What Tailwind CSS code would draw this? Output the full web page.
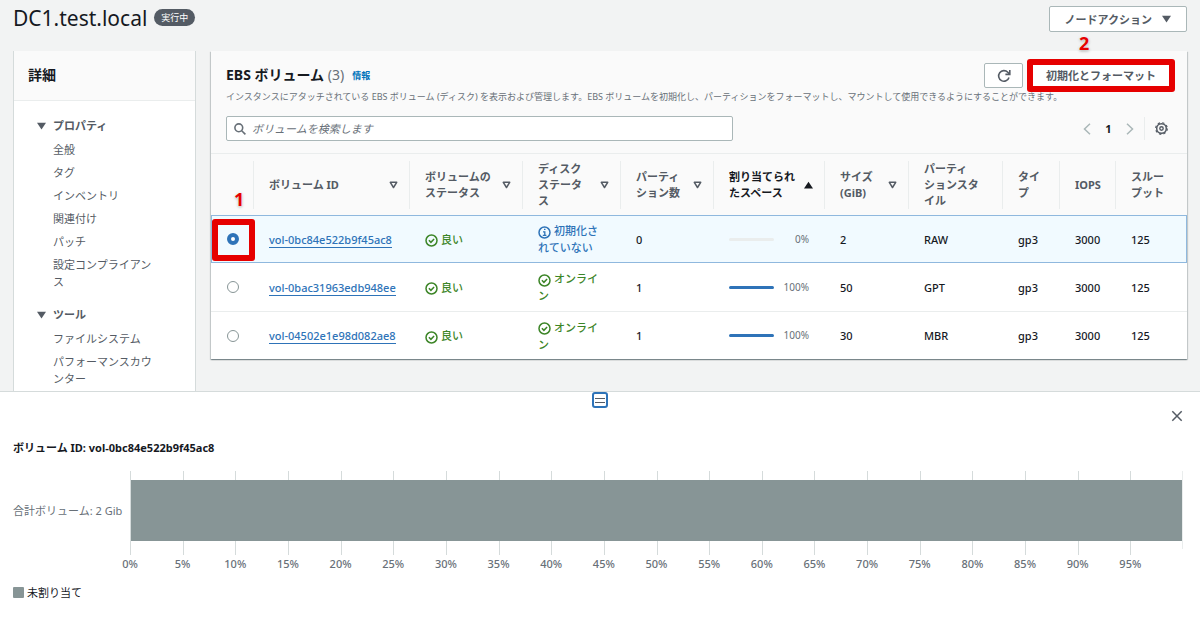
<!DOCTYPE html>
<html lang="ja">
<head>
  <meta charset="UTF-8" />
  <meta name="viewport" content="width=device-width, initial-scale=1.0" />
  <title>DC1.test.local</title>
  <script src="https://cdn.jsdelivr.net/npm/@tailwindcss/browser@4"></script>
</head>
<body class="flex flex-col h-screen overflow-hidden bg-[#f2f3f3] font-['Noto_Sans','Noto_Sans_CJK_JP',sans-serif] text-[11px] leading-[17px] text-[#16191f]">

  <!-- Shared icons -->
  <svg class="hidden">
    <symbol id="down" viewBox="0 0 8 7"><path d="M0 .5h8L4 6.5z" fill="currentColor" /></symbol>
    <symbol id="sort" viewBox="0 0 9 8"><path d="M1.3 1.3h6.4L4.5 6.5z" fill="none" stroke="currentColor" stroke-width="1.5" stroke-linejoin="round" /></symbol>
    <symbol id="ok" viewBox="0 0 13 13"><circle cx="6.5" cy="6.5" r="5.5" fill="none" stroke="currentColor" stroke-width="1.5" /><path d="M3.9 6.3l2 2 3.2-3.4" fill="none" stroke="currentColor" stroke-width="1.5" /></symbol>
    <symbol id="info" viewBox="0 0 13 13"><circle cx="6.5" cy="6.5" r="5.5" fill="none" stroke="currentColor" stroke-width="1.5" /><path d="M6 3.4h1.5M5 5.9h1.8v3.3M4.8 9.3h3.6" fill="none" stroke="currentColor" stroke-width="1.3" /></symbol>
  </svg>

  <div class="flex-1 min-h-0 overflow-hidden flex flex-col px-[13px]">
    <!-- Page header -->
    <header class="flex items-start shrink-0 pt-[6px] pb-[19px]">
      <h1 class="text-[21px] leading-[24px]">DC1.test.local</h1>
      <span class="ml-[7px] mt-[3px] px-[7px] rounded-full bg-[#545b64] text-white text-[9px] leading-[17px]">実行中</span>
      <button class="ml-auto h-[26px] px-[15px] flex items-center gap-[10px] bg-white border border-[#aab7b8] rounded-[2px] font-bold text-[#545b64]">
        ノードアクション
        <svg class="w-[9px] h-[8px]"><use href="#down" /></svg>
      </button>
    </header>

    <div class="flex flex-1 min-h-0 gap-[15px]">
      <!-- Sidebar -->
      <aside class="w-[183px] shrink-0 bg-white border-x border-[#d5dbdb]">
        <h2 class="h-[50px] px-[14px] pb-[2px] flex items-center bg-[#fafafa] border-b border-[#eaeded] text-[14px] font-bold">詳細</h2>
        <nav class="pt-[16px] pl-[23px] pr-[36px] flex flex-col gap-[16px] text-[#545b64]">
          <details open>
            <summary class="flex items-center gap-[7px] font-bold">
              <svg class="w-[9px] h-[8px]"><use href="#down" /></svg>プロパティ
            </summary>
            <ul class="mt-[7px] pl-[16px] flex flex-col gap-[6px]">
              <li><a href="#">全般</a></li>
              <li><a href="#">タグ</a></li>
              <li><a href="#">インベントリ</a></li>
              <li><a href="#">関連付け</a></li>
              <li><a href="#">パッチ</a></li>
              <li><a href="#">設定コンプライアンス</a></li>
            </ul>
          </details>
          <details open>
            <summary class="flex items-center gap-[7px] font-bold">
              <svg class="w-[9px] h-[8px]"><use href="#down" /></svg>ツール
            </summary>
            <ul class="mt-[7px] pl-[16px] flex flex-col gap-[6px]">
              <li><a href="#">ファイルシステム</a></li>
              <li><a href="#">パフォーマンスカウンター</a></li>
            </ul>
          </details>
        </nav>
      </aside>

      <!-- EBS volumes -->
      <main class="flex-1 min-w-0 self-start bg-white shadow-[0_1px_1px_0_rgba(0,28,36,0.3),1px_1px_1px_0_rgba(0,28,36,0.15),-1px_1px_1px_0_rgba(0,28,36,0.15)]">
        <div class="bg-[#fafafa] border-b border-[#eaeded] px-[15px] pt-[12px] pb-[12px]">
          <div class="flex items-center h-[25px]">
            <h2 class="pb-[2px] text-[14px] font-bold">EBS ボリューム <span class="font-normal text-[#687078]">(3)</span></h2>
            <a href="#" class="ml-[8px] text-[9px] font-bold text-[#0073bb]">情報</a>
            <button aria-label="更新" class="ml-auto w-[39px] h-[25px] flex items-center justify-center bg-white border border-[#aab7b8] rounded-[2px] text-[#545b64]">
              <svg class="w-[14px] h-[14px]" viewBox="0 0 14 14" fill="none" stroke="currentColor" stroke-width="1.6"><path d="M12 8.5A5.3 5.3 0 1 1 10.8 3.3L12.6 5.2" /><path d="M12.8 1v4.4H8.4" /></svg>
            </button>
            <div class="relative ml-[7px]">
              <button class="h-[25px] px-[15px] bg-white border border-[#aab7b8] rounded-[2px] font-bold text-[#545b64]">初期化とフォーマット</button>
              <span class="absolute -inset-x-[3px] -inset-y-[4px] border-[6px] border-[#e60000] rounded-[3px] pointer-events-none"></span>
              <span class="absolute left-[49px] -top-[32px] text-[18px] leading-[24px] font-bold text-[#e60000] [text-shadow:0_0_2px_#fff,0_1px_3px_#999]">2</span>
            </div>
          </div>
          <p class="text-[9px] leading-[18px] text-[#687078]">インスタンスにアタッチされている EBS ボリューム (ディスク) を表示および管理します。EBS ボリュームを初期化し、パーティションをフォーマットし、マウントして使用できるようにすることができます。</p>
          <div class="flex items-center mt-[10px]">
            <label class="flex items-center gap-[6px] w-[507px] h-[25px] px-[7px] bg-white border border-[#aab7b8] rounded-[2px] text-[#687078]">
              <svg class="w-[12px] h-[12px] shrink-0" viewBox="0 0 12 12" fill="none" stroke="currentColor" stroke-width="1.6"><circle cx="4.8" cy="4.8" r="3.9" /><path d="M7.7 7.7l3.7 3.7" /></svg>
              <input type="search" aria-label="ボリュームを検索します" placeholder="ボリュームを検索します" class="flex-1 min-w-0 outline-none placeholder:italic placeholder:text-[#687078]" />
            </label>
            <div class="ml-auto flex items-center pr-[4px]">
              <button aria-label="前へ" class="text-[#aab7b8]"><svg class="w-[8px] h-[12px]" viewBox="0 0 8 12" fill="none" stroke="currentColor" stroke-width="1.5"><path d="M7 .8L1.5 6 7 11.2" /></svg></button>
              <button class="w-[35px] font-bold">1</button>
              <button aria-label="次へ" class="text-[#aab7b8]"><svg class="w-[8px] h-[12px]" viewBox="0 0 8 12" fill="none" stroke="currentColor" stroke-width="1.5"><path d="M1 .8L6.5 6 1 11.2" /></svg></button>
              <button aria-label="設定" class="ml-[10px] pl-[10px] h-[23px] border-l border-[#eaeded] text-[#545b64]">
                <svg class="w-[13px] h-[13px]" viewBox="0 0 13 13" fill="none" stroke="currentColor"><circle cx="6.5" cy="6.5" r="4.8" stroke-width="1.5" /><circle cx="6.5" cy="6.5" r="5.8" stroke-width="1.2" stroke-dasharray="2.3 2.255" /><circle cx="6.5" cy="6.5" r="1.7" stroke-width="1.4" /></svg>
              </button>
            </div>
          </div>
        </div>

        <table class="w-full table-fixed border-separate border-spacing-0 text-left">
          <colgroup>
            <col class="w-[42px]" /><col class="w-[156px]" /><col class="w-[113px]" /><col class="w-[98px]" /><col class="w-[93px]" /><col class="w-[111px]" /><col class="w-[84px]" /><col class="w-[94px]" /><col class="w-[57px]" /><col class="w-[56px]" /><col class="w-[72px]" />
          </colgroup>
          <thead class="bg-[#fafafa] text-[#545b64] leading-[16px] whitespace-nowrap">
            <tr>
              <th class="p-0"></th>
              <th class="px-0 pt-[7px] pb-[6px]"><div class="flex items-center justify-between h-[48px] pl-[15px] pr-[11px] border-l border-[#eaeded]">ボリューム ID<svg class="w-[9px] h-[8px]"><use href="#sort" /></svg></div></th>
              <th class="px-0 pt-[7px] pb-[6px]"><div class="flex items-center justify-between h-[48px] pl-[15px] pr-[11px] border-l border-[#eaeded]"><span>ボリュームの<br />ステータス</span><svg class="w-[9px] h-[8px]"><use href="#sort" /></svg></div></th>
              <th class="px-0 pt-[7px] pb-[6px]"><div class="flex items-center justify-between h-[48px] pl-[15px] pr-[11px] border-l border-[#eaeded]"><span>ディスク<br />ステータ<br />ス</span><svg class="w-[9px] h-[8px]"><use href="#sort" /></svg></div></th>
              <th class="px-0 pt-[7px] pb-[6px]"><div class="flex items-center justify-between h-[48px] pl-[15px] pr-[11px] border-l border-[#eaeded]"><span>パーティ<br />ション数</span><svg class="w-[9px] h-[8px]"><use href="#sort" /></svg></div></th>
              <th class="px-0 pt-[7px] pb-[6px] text-[#16191f]"><div class="flex items-center justify-between h-[48px] pl-[15px] pr-[11px] border-l border-[#eaeded]"><span>割り当てられ<br />たスペース</span><svg class="w-[9px] h-[8px] rotate-180"><use href="#down" /></svg></div></th>
              <th class="px-0 pt-[7px] pb-[6px]"><div class="flex items-center justify-between h-[48px] pl-[15px] pr-[11px] border-l border-[#eaeded]"><span>サイズ<br />(GiB)</span><svg class="w-[9px] h-[8px]"><use href="#sort" /></svg></div></th>
              <th class="px-0 pt-[7px] pb-[6px]"><div class="flex items-center h-[48px] pl-[15px] border-l border-[#eaeded]"><span>パーティ<br />ションスタ<br />イル</span></div></th>
              <th class="px-0 pt-[7px] pb-[6px]"><div class="flex items-center h-[48px] pl-[15px] border-l border-[#eaeded]"><span>タイ<br />プ</span></div></th>
              <th class="px-0 pt-[7px] pb-[6px]"><div class="flex items-center h-[48px] pl-[15px] border-l border-[#eaeded]">IOPS</div></th>
              <th class="px-0 pt-[7px] pb-[6px]"><div class="flex items-center h-[48px] pl-[15px] border-l border-[#eaeded]"><span>スルー<br />プット</span></div></th>
            </tr>
          </thead>
          <tbody class="whitespace-nowrap font-medium [&_td]:h-[48px] [&_td]:py-0 [&_td]:pl-[16px] [&_td]:align-middle">
            <tr class="bg-[#f1faff] outline outline-[#8fb8de] -outline-offset-1">
              <td>
                <div class="relative flex">
                  <input type="radio" name="volume" checked aria-label="vol-0bc84e522b9f45ac8" class="appearance-none w-[12px] h-[12px] rounded-full border border-[#879596] bg-white checked:border-4 checked:border-[#2e73b8]" />
                  <span class="absolute -left-[15px] -top-[14px] w-[43px] h-[42px] border-[6px] border-[#e60000] rounded-[3px] pointer-events-none"></span>
                  <span class="absolute left-[7px] -top-[46px] text-[18px] leading-[24px] font-bold text-[#e60000] [text-shadow:0_0_2px_#fff,0_1px_3px_#999]">1</span>
                </div>
              </td>
              <td><a href="#" class="text-[#2e73b8] border-b border-[#2e73b8]">vol-0bc84e522b9f45ac8</a></td>
              <td class="text-[#3c8527]"><svg class="inline w-[13px] h-[13px] mr-[3px]"><use href="#ok" /></svg>良い</td>
              <td class="text-[#2e73b8]"><svg class="inline w-[13px] h-[13px] mr-[3px]"><use href="#info" /></svg>初期化さ<br />れていない</td>
              <td>0</td>
              <td><div class="flex items-center justify-between pr-[15px]"><progress value="0" max="100" aria-label="割り当て率" class="appearance-none w-[45px] h-[3px] rounded-full overflow-hidden bg-[#eaeded] [&::-webkit-progress-bar]:bg-[#eaeded] [&::-webkit-progress-value]:bg-[#2e73b8]"></progress><span class="text-[10px] font-normal text-[#687078]">0%</span></div></td>
              <td>2</td>
              <td>RAW</td>
              <td>gp3</td>
              <td>3000</td>
              <td>125</td>
            </tr>
            <tr>
              <td><input type="radio" name="volume" aria-label="vol-0bac31963edb948ee" class="block appearance-none w-[12px] h-[12px] rounded-full border border-[#879596] bg-white checked:border-4 checked:border-[#2e73b8]" /></td>
              <td><a href="#" class="text-[#2e73b8] border-b border-[#2e73b8]">vol-0bac31963edb948ee</a></td>
              <td class="text-[#3c8527]"><svg class="inline w-[13px] h-[13px] mr-[3px]"><use href="#ok" /></svg>良い</td>
              <td class="text-[#3c8527]"><svg class="inline w-[13px] h-[13px] mr-[3px]"><use href="#ok" /></svg>オンライ<br />ン</td>
              <td>1</td>
              <td><div class="flex items-center justify-between pr-[15px]"><progress value="100" max="100" aria-label="割り当て率" class="appearance-none w-[45px] h-[3px] rounded-full overflow-hidden bg-[#eaeded] [&::-webkit-progress-bar]:bg-[#eaeded] [&::-webkit-progress-value]:bg-[#2e73b8]"></progress><span class="text-[10px] font-normal text-[#687078]">100%</span></div></td>
              <td>50</td>
              <td>GPT</td>
              <td>gp3</td>
              <td>3000</td>
              <td>125</td>
            </tr>
            <tr class="[&_td]:h-[47px] [&_td]:border-t [&_td]:border-[#eaeded]">
              <td><input type="radio" name="volume" aria-label="vol-04502e1e98d082ae8" class="block appearance-none w-[12px] h-[12px] rounded-full border border-[#879596] bg-white checked:border-4 checked:border-[#2e73b8]" /></td>
              <td><a href="#" class="text-[#2e73b8] border-b border-[#2e73b8]">vol-04502e1e98d082ae8</a></td>
              <td class="text-[#3c8527]"><svg class="inline w-[13px] h-[13px] mr-[3px]"><use href="#ok" /></svg>良い</td>
              <td class="text-[#3c8527]"><svg class="inline w-[13px] h-[13px] mr-[3px]"><use href="#ok" /></svg>オンライ<br />ン</td>
              <td>1</td>
              <td><div class="flex items-center justify-between pr-[15px]"><progress value="100" max="100" aria-label="割り当て率" class="appearance-none w-[45px] h-[3px] rounded-full overflow-hidden bg-[#eaeded] [&::-webkit-progress-bar]:bg-[#eaeded] [&::-webkit-progress-value]:bg-[#2e73b8]"></progress><span class="text-[10px] font-normal text-[#687078]">100%</span></div></td>
              <td>30</td>
              <td>MBR</td>
              <td>gp3</td>
              <td>3000</td>
              <td>125</td>
            </tr>
          </tbody>
        </table>
      </main>
    </div>
  </div>

  <!-- Split panel -->
  <section class="shrink-0 bg-white border-t border-[#d5dbdb] px-[13px] pb-[25px]">
    <div class="flex justify-center">
      <button aria-label="パネルのサイズを変更" class="w-[16px] h-[16px] flex flex-col items-center justify-center gap-[3px] border-2 border-[#2e73b8] rounded-[3px] bg-white">
        <span class="w-[10px] h-px bg-[#545b64]"></span>
        <span class="w-[10px] h-px bg-[#545b64]"></span>
      </button>
    </div>
    <div class="flex justify-end pt-[2px] pr-[4px]">
      <button aria-label="閉じる" class="text-[#545b64]"><svg class="w-[12px] h-[12px]" viewBox="0 0 12 12" fill="none" stroke="currentColor" stroke-width="1.5"><path d="M1.3 1.3l9.4 9.4M10.7 1.3L1.3 10.7" /></svg></button>
    </div>
    <h3 class="mt-[17px] font-bold">ボリューム ID: vol-0bc84e522b9f45ac8</h3>

    <div class="flex mt-[15px] pr-[4px] text-[#687078]">
      <div class="w-[117px] shrink-0 h-[78px] flex items-center">合計ボリューム: 2 Gib</div>
      <div class="flex-1">
        <div class="relative h-[84px]">
          <div id="grid" class="grid grid-cols-20 h-full"></div>
          <span class="absolute right-0 top-0 w-px h-[78px] bg-[#eaeded]"></span>
          <div class="absolute left-px right-px top-[9px] h-[61px] bg-[#879596]"></div>
        </div>
        <div id="ticks" class="grid grid-cols-20 text-center font-medium"></div>
      </div>
    </div>
    <div class="flex items-center gap-[3px] mt-[12px] text-[#16191f]">
      <span class="w-[11px] h-[11px] bg-[#879596] rounded-[1px]"></span>未割り当て
    </div>
  </section>

  <script>
    const grid = document.getElementById('grid');
    const ticks = document.getElementById('ticks');

    for (let p = 0; p < 100; p += 5) {
      grid.insertAdjacentHTML('beforeend', '<span class="border-l border-[#d5dbdb]"></span>');
      ticks.insertAdjacentHTML('beforeend', `<span class="-ml-[50%] mr-[50%]">${p}%</span>`);
    }
  </script>
</body>
</html>
